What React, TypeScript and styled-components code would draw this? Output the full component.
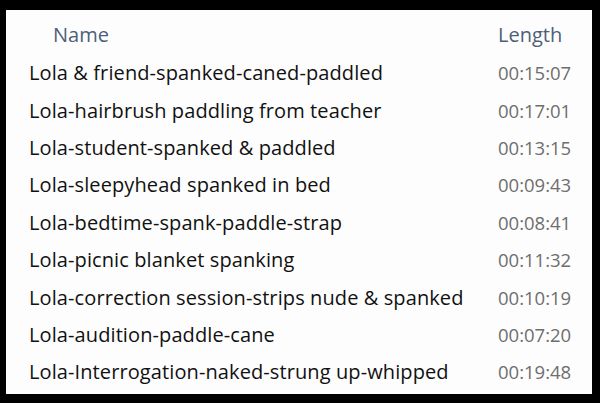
import React from 'react';
import styled, { createGlobalStyle } from 'styled-components';

const files = [
  { name: 'Lola & friend-spanked-caned-paddled', length: '00:15:07' },
  { name: 'Lola-hairbrush paddling from teacher', length: '00:17:01' },
  { name: 'Lola-student-spanked & paddled', length: '00:13:15' },
  { name: 'Lola-sleepyhead spanked in bed', length: '00:09:43' },
  { name: 'Lola-bedtime-spank-paddle-strap', length: '00:08:41' },
  { name: 'Lola-picnic blanket spanking', length: '00:11:32' },
  { name: 'Lola-correction session-strips nude & spanked', length: '00:10:19' },
  { name: 'Lola-audition-paddle-cane', length: '00:07:20' },
  { name: 'Lola-Interrogation-naked-strung up-whipped', length: '00:19:48' },
];

function App() {
  return (
    <>
      <GlobalStyle />
      <Frame>
        <Panel>
          <HeaderRow>
            <HeaderCell $indent={24}>Name</HeaderCell>
            <HeaderCell $indent={0}>Length</HeaderCell>
          </HeaderRow>
          {files.map((file) => (
            <Row key={file.name}>
              <NameCell>{file.name}</NameCell>
              <LengthCell>{file.length}</LengthCell>
            </Row>
          ))}
        </Panel>
      </Frame>
    </>
  );
}

const GlobalStyle = createGlobalStyle`
  html, body {
    margin: 0;
    background: #000;
  }
`;

const Frame = styled.div`
  width: 600px;
  height: 403px;
  box-sizing: border-box;
  padding: 10px 8px 9px 6px;
  background: #000;
  display: flex;
`;

const Panel = styled.div`
  flex: 1;
  background: #fdfdfd;
  padding: 4px 0 0 23px;
  font-family: 'Open Sans', 'Liberation Sans', sans-serif;
  font-size: 20px;
`;

const HeaderRow = styled.div`
  display: grid;
  grid-template-columns: 469px 1fr;
  height: 40px;
  align-items: center;
`;

const HeaderCell = styled.div<{ $indent: number }>`
  padding-left: ${(p) => p.$indent}px;
  color: #4d5f78;
  font-size: 20px;
`;

const Row = styled.div`
  display: grid;
  grid-template-columns: 469px 1fr;
  height: 37.4px;
  align-items: center;
`;

const NameCell = styled.div`
  color: #111;
  white-space: nowrap;
  letter-spacing: 0.1px;
`;

const LengthCell = styled.div`
  color: #6e6e6e;
  font-size: 18.5px;
`;

export default App;
